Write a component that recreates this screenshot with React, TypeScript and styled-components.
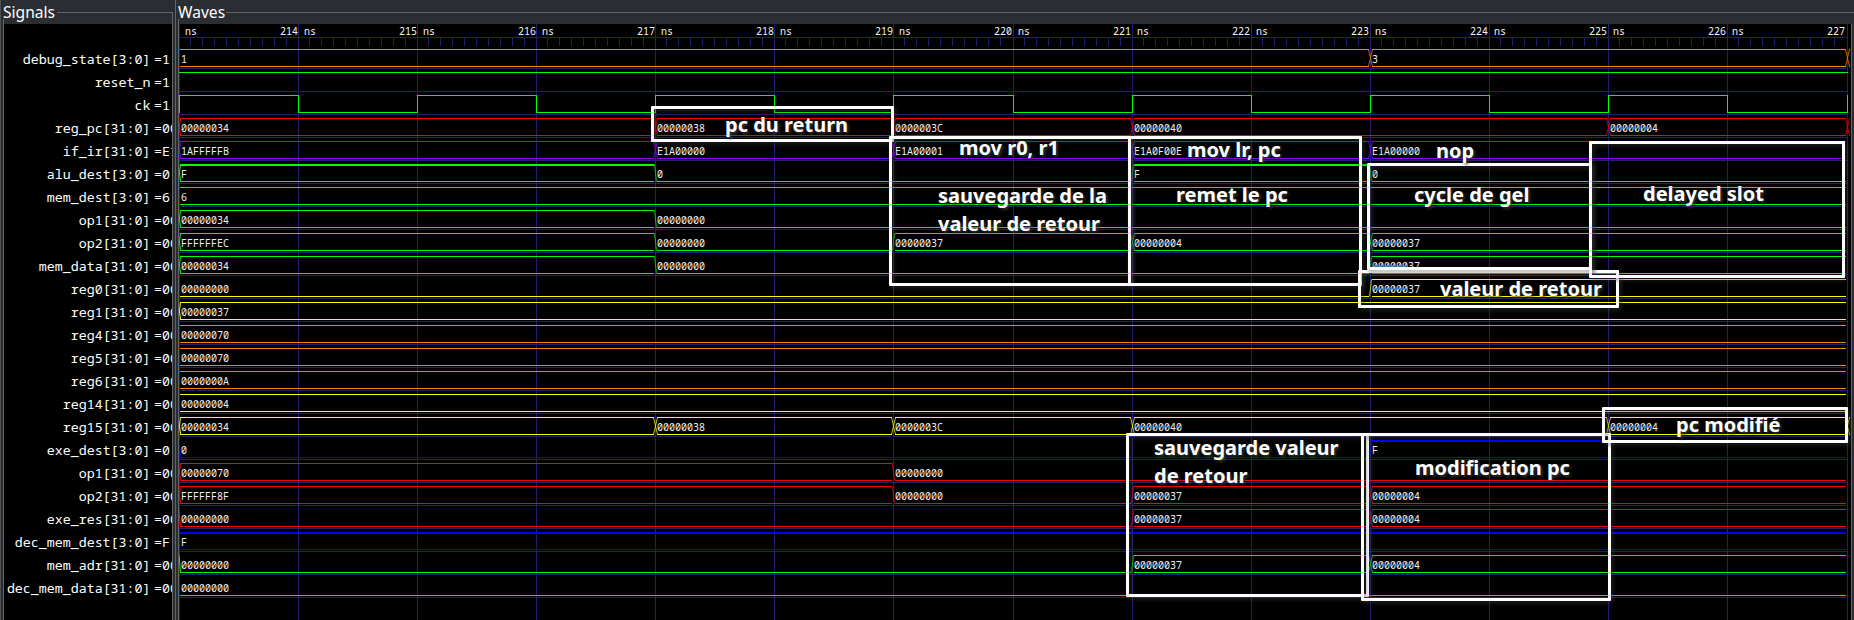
import React from "react";
import styled, { createGlobalStyle } from "styled-components";

const GlobalStyle = createGlobalStyle`
  * { box-sizing: border-box; }
  body { margin: 0; background: #2a2e32; overflow: hidden; }
`;

const MONO = '"Noto Sans Mono", "DejaVu Sans Mono", monospace';
const FRAME = "#616568";
const GRID = "#202070";
const ROW = 23;
const TOP = 3;
const BOTTOM = 20;

const GREEN = "#00ff00";
const RED = "#ff0000";
const ORANGE = "#ff8000";
const VIOLET = "#8f00ff";
const YELLOW = "#ffff00";
const BLUE = "#0000ff";

/* Horizontal position of each whole nanosecond in the wave area. */
const MARKS = [0, 119, 238, 357, 476, 595, 714, 834, 953, 1072, 1191, 1310, 1429, 1548, 1668];
const FIRST_NS = 213;
const END = 1667;
const WIDTH = 1671;

type Change = [ns: number, value: string];

interface Signal {
  name: string;
  value: string;
  color: string;
  kind?: "high" | "clock";
  changes?: Change[];
  opens?: boolean;
  closes?: boolean;
}

const SIGNALS: Signal[] = [
  { name: "debug_state[3:0]", value: "1", color: ORANGE, changes: [[213, "1"], [223, "3"]], closes: true },
  { name: "reset_n", value: "1", color: GREEN, kind: "high" },
  { name: "ck", value: "1", color: GREEN, kind: "clock" },
  { name: "reg_pc[31:0]", value: "00000034", color: RED, opens: true, closes: true,
    changes: [[213, "00000034"], [217, "00000038"], [219, "0000003C"], [221, "00000040"], [225, "00000004"]] },
  { name: "if_ir[31:0]", value: "E1A00000", color: VIOLET, opens: true,
    changes: [[213, "1AFFFFFB"], [217, "E1A00000"], [219, "E1A00001"], [221, "E1A0F00E"], [223, "E1A00000"]] },
  { name: "alu_dest[3:0]", value: "0", color: GREEN, opens: true, changes: [[213, "F"], [217, "0"], [221, "F"], [223, "0"]] },
  { name: "mem_dest[3:0]", value: "6", color: GREEN, changes: [[213, "6"]] },
  { name: "op1[31:0]", value: "00000034", color: GREEN, opens: true, changes: [[213, "00000034"], [217, "00000000"]] },
  { name: "op2[31:0]", value: "00000000", color: GREEN, opens: true,
    changes: [[213, "FFFFFFEC"], [217, "00000000"], [219, "00000037"], [221, "00000004"], [223, "00000037"]] },
  { name: "mem_data[31:0]", value: "00000034", color: GREEN, opens: true,
    changes: [[213, "00000034"], [217, "00000000"], [223, "00000037"]] },
  { name: "reg0[31:0]", value: "00000000", color: YELLOW, changes: [[213, "00000000"], [223, "00000037"]] },
  { name: "reg1[31:0]", value: "00000037", color: YELLOW, opens: true, changes: [[213, "00000037"]] },
  { name: "reg4[31:0]", value: "00000070", color: ORANGE, changes: [[213, "00000070"]] },
  { name: "reg5[31:0]", value: "00000070", color: ORANGE, changes: [[213, "00000070"]] },
  { name: "reg6[31:0]", value: "0000000A", color: ORANGE, changes: [[213, "0000000A"]] },
  { name: "reg14[31:0]", value: "00000004", color: YELLOW, changes: [[213, "00000004"]] },
  { name: "reg15[31:0]", value: "00000034", color: YELLOW, opens: true, closes: true,
    changes: [[213, "00000034"], [217, "00000038"], [219, "0000003C"], [221, "00000040"], [225, "00000004"]] },
  { name: "exe_dest[3:0]", value: "0", color: BLUE, opens: true, changes: [[213, "0"], [223, "F"]] },
  { name: "op1[31:0]", value: "00000070", color: RED, opens: true, changes: [[213, "00000070"], [219, "00000000"]] },
  { name: "op2[31:0]", value: "00000000", color: RED, opens: true,
    changes: [[213, "FFFFFF8F"], [219, "00000000"], [221, "00000037"], [223, "00000004"]] },
  { name: "exe_res[31:0]", value: "00000000", color: RED, opens: true,
    changes: [[213, "00000000"], [221, "00000037"], [223, "00000004"]] },
  { name: "dec_mem_dest[3:0]", value: "F", color: BLUE, changes: [[213, "F"]] },
  { name: "mem_adr[31:0]", value: "00000000", color: GREEN, opens: true,
    changes: [[213, "00000000"], [221, "00000037"], [223, "00000004"]] },
  { name: "dec_mem_data[31:0]", value: "00000000", color: GREEN, changes: [[213, "00000000"]] },
];

const Window = styled.main`
  position: relative;
  display: flex;
  width: 1854px;
  height: 620px;
  overflow: hidden;
  background: #2a2e32;
  border-left: 1px solid #4b4f53;
`;

const Panel = styled.section<{ $width: number; $gap: number }>`
  display: flex;
  flex-direction: column;
  flex: none;
  width: ${(p) => p.$width}px;
  margin-left: ${(p) => p.$gap}px;
`;

const Divider = styled.div`
  flex: none;
  width: 1px;
  margin-left: 2px;
  background: ${FRAME};
`;

const PanelHeader = styled.header<{ $overhang: number }>`
  display: flex;
  height: 24px;
  flex: none;
  margin-right: -${(p) => p.$overhang}px;
  background: linear-gradient(${FRAME}, ${FRAME}) 0 100% / 1px 5px no-repeat;
`;

const PanelTitle = styled.h1<{ $width: number }>`
  flex: none;
  width: ${(p) => p.$width}px;
  margin: 0;
  font: 400 15.6px/24px "Noto Sans", sans-serif;
  color: #fcfcfc;
  white-space: nowrap;
`;

const HeaderRule = styled.div<{ $corner: boolean }>`
  flex: 1;
  margin-top: 12px;
  border-top: 1px solid ${FRAME};
  border-right: ${(p) => (p.$corner ? `1px solid ${FRAME}` : "none")};
`;

const PanelBody = styled.div`
  display: flex;
  flex-direction: column;
  flex: 1;
  overflow: hidden;
  background: #000;
  border-left: 1px solid ${FRAME};
  border-right: 1px solid ${FRAME};
`;

const NameList = styled.ul`
  margin: 22px 0 0;
  padding: 0;
  list-style: none;
`;

const NameRow = styled.li`
  display: grid;
  grid-template-columns: 146.5px 1fr;
  column-gap: 3.5px;
  height: ${ROW}px;
  font: 13.3px/26px ${MONO};
  color: #fff;
  white-space: pre;
`;

const SignalName = styled.span`
  text-align: right;
`;

const SignalValue = styled.span`
  min-width: 0;
`;

const Strip = styled.svg`
  display: block;
  flex: none;
  shape-rendering: crispEdges;
`;

const StripText = styled.text`
  font: 10px ${MONO};
  fill: #f0f0f0;
`;

const Box = styled.div<{ $x: number; $y: number; $w: number; $h: number }>`
  position: absolute;
  left: ${(p) => p.$x - 1}px;
  top: ${(p) => p.$y}px;
  width: ${(p) => p.$w}px;
  height: ${(p) => p.$h}px;
  border: 3px solid #fff;
  border-radius: 1px;
  filter: drop-shadow(2px 2px 2px rgba(63, 63, 63, 0.6));
`;

const Note = styled.p<{ $x: number; $y: number }>`
  position: absolute;
  left: ${(p) => p.$x - 1}px;
  top: ${(p) => p.$y}px;
  margin: 0;
  font: 700 20px/28px "Noto Sans", sans-serif;
  color: #fff;
  white-space: pre;
  text-shadow: 2px 2px 3px rgba(63, 63, 63, 0.8);
`;

const isZero = (v: string) => /^0+$/.test(v);
const isFull = (v: string) => /^F+$/.test(v);

function HLine({ from, to, y, color, thick }: { from: number; to: number; y: number; color: string; thick?: boolean }) {
  return <rect x={from} y={y} width={to - from} height={thick ? 2 : 1} fill={color} />;
}

function Edge({ x, before, after, color }: { x: number; before: string; after: string; color: string }) {
  const c = x + 0.5;
  const top = TOP + 0.5;
  const bottom = BOTTOM + 0.5;
  let d: string;
  if (!isZero(before) && !isZero(after)) {
    d = `M${c - 2} ${top}L${c + 2} ${bottom}M${c - 2} ${bottom}L${c + 2} ${top}`;
  } else if (!isZero(before)) {
    d = `M${c - 1} ${top}L${c + 1} ${bottom}`;
  } else {
    d = `M${c - 1} ${bottom}L${c + 1} ${top}`;
  }
  return <path d={d} stroke={color} strokeOpacity={0.75} fill="none" shapeRendering="auto" />;
}

function Bus({ signal }: { signal: Signal }) {
  const changes = signal.changes ?? [];
  return (
    <>
      {changes.map(([ns, value], i) => {
        const x = MARKS[ns - FIRST_NS];
        const next = changes[i + 1];
        const stop = next ? MARKS[next[0] - FIRST_NS] - 1 : END;
        const start = i === 0 ? 1 : x + 2;
        return (
          <React.Fragment key={ns}>
            {!isZero(value) && <HLine from={start} to={stop} y={TOP} color={signal.color} thick={isFull(value)} />}
            <HLine from={start} to={stop} y={BOTTOM} color={signal.color} />
            {i > 0 && <Edge x={x} before={changes[i - 1][1]} after={value} color={signal.color} />}
            {i === 0 && signal.opens && (
              <path
                d={isZero(value) ? `M0 ${TOP}L1.5 ${BOTTOM}` : `M0.5 12L1.5 ${TOP}M0.5 12L1.5 ${BOTTOM}`}
                stroke={signal.color}
                fill="none"
                shapeRendering="auto"
              />
            )}
            {!next && signal.closes && <Edge x={MARKS[14]} before={value} after="X" color={signal.color} />}
            <StripText x={x + 2} y={17}>{value}</StripText>
          </React.Fragment>
        );
      })}
      {signal.closes && (
        <>
          <HLine from={1670} to={1671} y={TOP} color={signal.color} />
          <HLine from={1670} to={1671} y={BOTTOM} color={signal.color} />
        </>
      )}
    </>
  );
}

function Clock({ color }: { color: string }) {
  const d = MARKS.map((x, i) => {
    const level = i % 2 === 0 ? TOP : BOTTOM;
    const next = MARKS[i + 1] ?? x;
    return `M${x + 0.5} ${TOP}V${BOTTOM + 1}M${x} ${level + 0.5}H${next + 1}`;
  }).join("");
  return <path d={d} stroke={color} fill="none" />;
}

function GridLines({ height }: { height: number }) {
  return (
    <>
      {MARKS.map((x) => (
        <rect key={x} x={x} y={0} width={1} height={height} fill={GRID} />
      ))}
    </>
  );
}

function Ruler() {
  return (
    <Strip width={WIDTH} height={22}>
      <GridLines height={22} />
      <HLine from={0} to={1669} y={13} color={GRID} />
      {MARKS.slice(0, 14).map((x) =>
        Array.from({ length: 9 }, (_, k) => (
          <rect key={`${x}-${k}`} x={x + 11 + 12 * k} y={14} width={1} height={8} fill={GRID} />
        ))
      )}
      {MARKS.map((x, i) => (
        <StripText key={x} x={-18 + 119 * i} y={11}>{`${FIRST_NS + i} ns`}</StripText>
      ))}
    </Strip>
  );
}

function WaveStrip({ signal }: { signal: Signal }) {
  return (
    <Strip width={WIDTH} height={ROW}>
      <GridLines height={ROW} />
      <HLine from={0} to={1669} y={22} color={GRID} />
      {signal.kind === "high" && <HLine from={0} to={1669} y={TOP} color={signal.color} />}
      {signal.kind === "clock" && <Clock color={signal.color} />}
      {signal.changes && <Bus signal={signal} />}
    </Strip>
  );
}

const BOXES = [
  [651, 106, 243, 36],
  [889, 136, 242, 150],
  [1128, 136, 234, 150],
  [1358, 270, 261, 38],
  [1367, 163, 225, 107],
  [1589, 141, 256, 137],
  [1126, 433, 243, 164],
  [1361, 433, 250, 168],
  [1602, 407, 246, 36],
];

const NOTES: [number, number, string][] = [
  [725, 111, "pc du return"],
  [959, 134, "mov r0, r1"],
  [938, 182, "sauvegarde de la\nvaleur de retour"],
  [1187, 136, "mov lr, pc"],
  [1176, 181, "remet le pc"],
  [1436, 137, "nop"],
  [1414, 181, "cycle de gel"],
  [1643, 180, "delayed slot"],
  [1440, 275, "valeur de retour"],
  [1154, 434, "sauvegarde valeur\nde retour"],
  [1415, 454, "modification pc"],
  [1676, 411, "pc modifié"],
];

export default function App() {
  return (
    <>
      <GlobalStyle />
      <Window>
        <Panel $width={170} $gap={2}>
          <PanelHeader $overhang={0}>
            <PanelTitle $width={54}>Signals</PanelTitle>
            <HeaderRule $corner />
          </PanelHeader>
          <PanelBody>
            <NameList>
              {SIGNALS.map((s, i) => (
                <NameRow key={i}>
                  <SignalName>{s.name}</SignalName>
                  <SignalValue>={s.value.slice(0, 2)}</SignalValue>
                </NameRow>
              ))}
            </NameList>
          </PanelBody>
        </Panel>
        <Divider />
        <Panel $width={1674} $gap={2}>
          <PanelHeader $overhang={2}>
            <PanelTitle $width={48}>Waves</PanelTitle>
            <HeaderRule $corner={false} />
          </PanelHeader>
          <PanelBody>
            <Ruler />
            {SIGNALS.map((s, i) => (
              <WaveStrip key={i} signal={s} />
            ))}
            <Strip width={WIDTH} height={22}>
              <GridLines height={22} />
            </Strip>
          </PanelBody>
        </Panel>
        {BOXES.map(([x, y, w, h]) => (
          <Box key={`${x}-${y}`} $x={x} $y={y} $w={w} $h={h} />
        ))}
        {NOTES.map(([x, y, text]) => (
          <Note key={text} $x={x} $y={y}>{text}</Note>
        ))}
      </Window>
    </>
  );
}
